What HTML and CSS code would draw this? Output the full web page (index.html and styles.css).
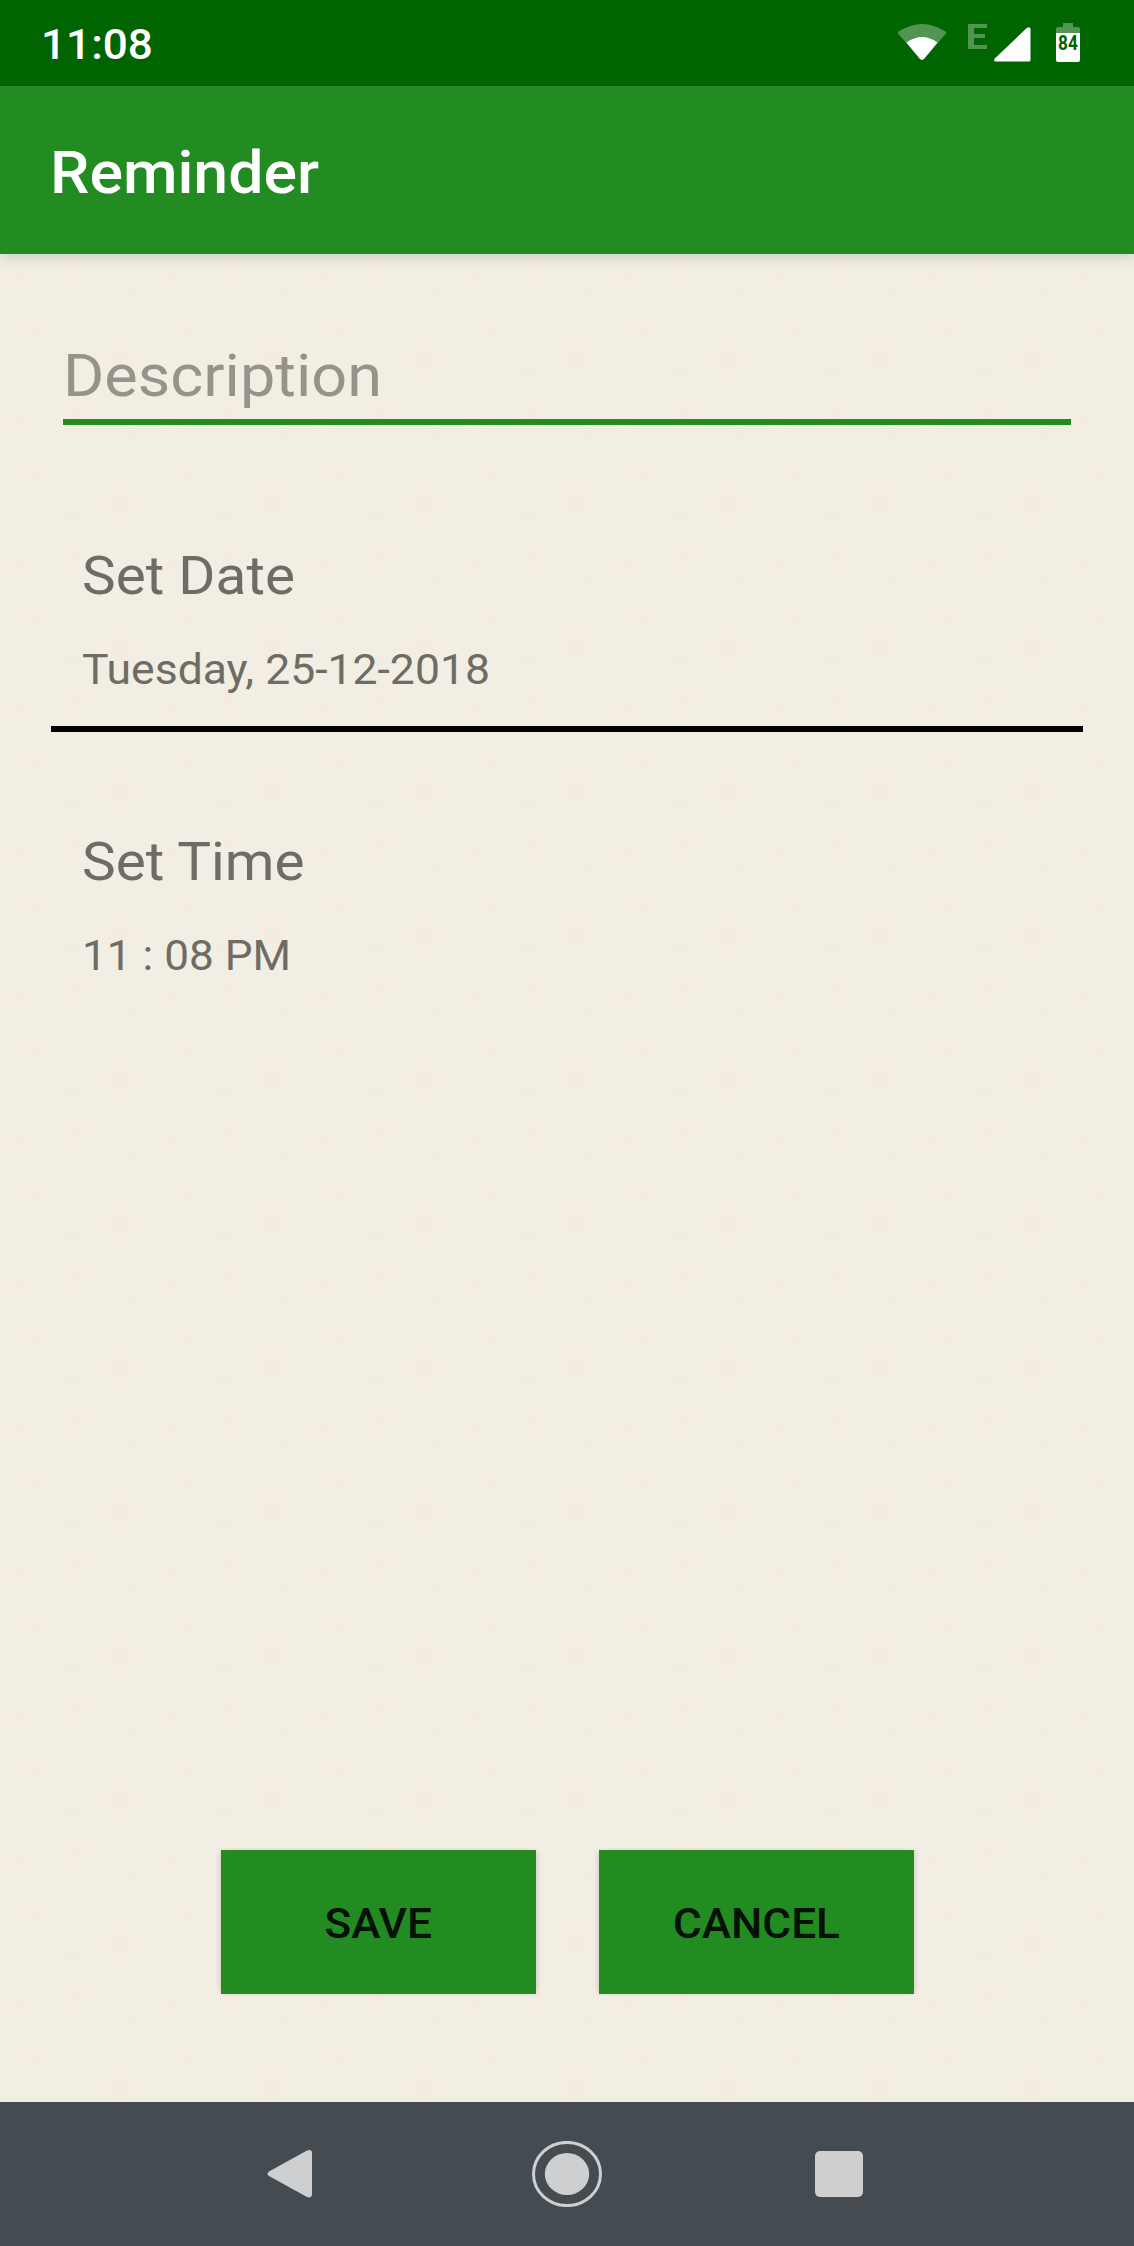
FILE: index.html
```html
<!DOCTYPE html>
<html lang="en">
<head>
<meta charset="utf-8">
<title>Reminder</title>
<link rel="stylesheet" href="styles.css">
</head>
<body>
<div class="screen">
  <div class="status-bar">
    <span class="clock wide">11:08</span>
    <div class="status-icons">
      <svg class="wifi" width="50" height="38" viewBox="0 0 50 38" aria-hidden="true">
        <path d="M1.5 8.5Q25-6.500 48.500 8.500Q49.500 9.500 48.500 11L27 36Q25 37.500 23 36L1.500 11Q.500 9.500 1.500 8.500Z" fill="#fff" opacity=".32"/>
        <path d="M9.500 19.500Q25 8.500 40.500 19.500L27 36Q25 37.500 23 36Z" fill="#fff"/>
      </svg>
      <svg class="network" width="19" height="25" viewBox="0 0 19 25" aria-hidden="true">
        <path d="M0 0h6v25H0zM6 0h13v4H6zM6 10h11v4H6zM6 21h13v4H6z" fill="#fff" opacity=".32"/>
      </svg>
      <svg class="signal" width="37" height="35" viewBox="0 0 37 35" aria-hidden="true">
        <path d="M33 .800Q36.500-.800 36.500 2V33Q36.500 34.500 35 34.500H2Q-.800 34.500 .800 31.500Z" fill="#fff"/>
      </svg>
      <div class="battery">
        <svg width="24" height="39" viewBox="0 0 24 39" aria-hidden="true">
          <path d="M7 0h10v4h5q2 0 2 2v4H0V6q0-2 2-2h5z" fill="#fff" opacity=".32"/>
          <path d="M0 10h24v27q0 2-2 2H2q-2 0-2-2z" fill="#fff"/>
        </svg>
        <span class="battery-level">84</span>
      </div>
    </div>
  </div>

  <header class="app-bar"><h1 class="wide">Reminder</h1></header>

  <main class="content">
    <div class="field"><span class="wide">Description</span></div>
    <section class="option option-date">
      <h2><span class="wide">Set Date</span></h2>
      <p><span class="wide date">Tuesday, 25-12-2018</span></p>
    </section>
    <section class="option">
      <h2><span class="wide">Set Time</span></h2>
      <p><span class="wide">11 : 08 PM</span></p>
    </section>
    <div class="actions">
      <button type="button"><span class="wide">SAVE</span></button>
      <button type="button"><span class="wide">CANCEL</span></button>
    </div>
  </main>

  <nav class="nav-bar">
    <svg class="back" width="46" height="50" viewBox="0 0 46 50" aria-label="Back">
      <path d="M2 22.500 40 1.500Q45-.500 45 4V45Q45 49.500 40 48L2 27Q-1 25 2 22.500Z"/>
    </svg>
    <svg class="home" width="70" height="66" viewBox="0 0 70 66" aria-label="Home">
      <ellipse class="ring" cx="35" cy="33" rx="33.500" ry="31.600"/>
      <ellipse cx="35" cy="33" rx="22.200" ry="21"/>
    </svg>
    <svg class="recents" width="48" height="46" viewBox="0 0 48 46" aria-label="Recents">
      <rect width="48" height="46" rx="5"/>
    </svg>
  </nav>
</div>
</body>
</html>
```
FILE: styles.css
```css
* { box-sizing: border-box; margin: 0; padding: 0; }

body {
  font-family: Roboto, "Liberation Sans", sans-serif;
  background: #f3eee3;
}

.screen {
  width: 1134px;
  height: 2246px;
  display: flex;
  flex-direction: column;
  overflow: hidden;
}

/* Slightly extended letterforms */
.wide {
  display: inline-block;
  transform: scaleX(1.05);
  transform-origin: left center;
  white-space: pre;
}

.status-bar {
  position: relative;
  z-index: 2;
  height: 86px;
  background: #006400;
  color: #fff;
  display: flex;
  justify-content: space-between;
  padding: 0 54px 0 41px;
}
.clock { font-size: 42px; font-weight: 500; line-height: 89px; }
.status-icons { display: flex; align-items: flex-start; }
.wifi { margin-top: 23px; }
.network { margin: 24px 0 0 21px; }
.signal { margin: 27px 0 0 7px; }
.battery { position: relative; width: 24px; height: 39px; margin: 23px 0 0 25px; }
.battery svg { display: block; }
.battery-level {
  position: absolute;
  left: 0;
  top: 10px;
  width: 24px;
  text-align: center;
  font: 700 20px/20px Roboto, sans-serif;
  color: #006400;
  transform: scaleX(.86);
}

.app-bar {
  position: relative;
  height: 168px;
  padding-left: 50px;
  background: #228b22;
  color: #fff;
  box-shadow: 0 3px 12px rgba(0, 0, 0, .15);
}
.app-bar h1 { font-size: 60px; font-weight: 500; line-height: 173px; transform: scaleX(1.043); }

.content {
  flex: 1;
  display: flex;
  flex-direction: column;
  padding: 88px 51px 108px;
  background:
    radial-gradient(circle at 12% 18%, rgba(247, 232, 224, .7), transparent 10px),
    radial-gradient(circle at 78% 72%, rgba(247, 232, 224, .7), transparent 18px),
    radial-gradient(circle at 50% 10%, rgba(247, 232, 224, .7), transparent 11px),
    radial-gradient(circle at 22% 52%, rgba(247, 232, 224, .7), transparent 10px),
    radial-gradient(circle at 48% 82%, rgba(238, 236, 224, .6), transparent 12px),
    radial-gradient(circle at 88% 28%, rgba(238, 236, 224, .6), transparent 12px),
    #f3eee3;
  background-size: 152px 144px;
}
.field {
  height: 83px;
  margin: 0 12px 119px;
  border-bottom: 6px solid #228b22;
  font-size: 60px;
  line-height: 67px;
  color: #97938a;
}
.option { padding-left: 31px; color: #6f6b65; }
.option h2 { font-size: 54px; font-weight: 400; line-height: 64px; margin-bottom: 37px; }
.option p { font-size: 42px; line-height: 50px; }
.option-date { padding-bottom: 31px; border-bottom: 6px solid #000; margin-bottom: 98px; }
.date { transform: scaleX(1.06); }

.actions {
  margin-top: auto;
  display: flex;
  justify-content: center;
  gap: 63px;
}
.actions button {
  width: 315px;
  height: 144px;
  padding-top: 3px;
  border: 0;
  background: #228b22;
  color: #041104;
  font: 500 42px/50px Roboto, sans-serif;
  box-shadow: 3px 0 5px -2px rgba(0, 0, 0, .16), -3px 0 5px -2px rgba(0, 0, 0, .16);
}
.actions .wide { transform-origin: center; }

.nav-bar {
  height: 144px;
  padding-left: 267px;
  display: flex;
  align-items: center;
  background: #454c51;
  fill: #cdcfd1;
}
.home { margin-left: 219px; }
.ring { fill: none; stroke: #cdcfd1; stroke-width: 3; }
.recents { margin-left: 213px; }
```
